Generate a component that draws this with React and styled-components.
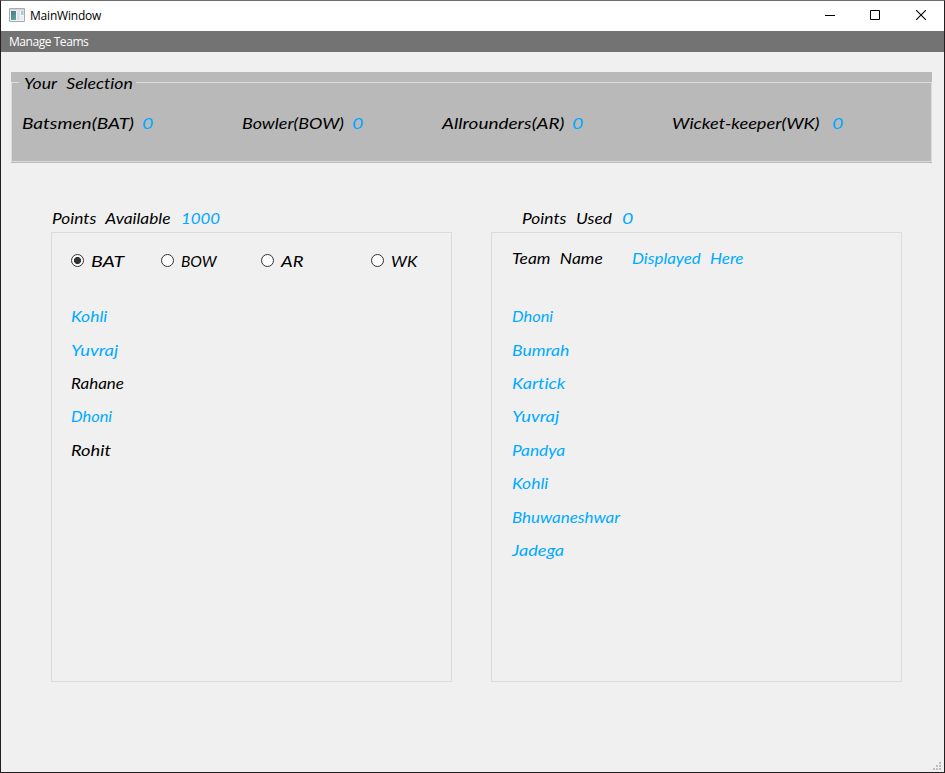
import React, { useLayoutEffect, useRef, useState } from "react";
import styled, { createGlobalStyle } from "styled-components";

const GlobalStyle = createGlobalStyle`
  * { box-sizing: border-box; }
  body { margin: 0; overflow: hidden; background: #f0f0f0; }
`;

const Window = styled.div`
  width: 945px;
  height: 773px;
  display: flex;
  flex-direction: column;
  background: #f0f0f0;
  border: 1px solid #231f20;
  border-top-color: #6c6c6c;
`;

const TitleBar = styled.header`
  height: 30px;
  flex: none;
  display: flex;
  align-items: center;
  background: #fff;
  padding-left: 8px;
`;

const AppIcon = styled.svg`
  width: 16px;
  height: 14px;
  margin: 0 5px 2px 0;
`;

const UiText = styled.span`
  font: 12px/20px "Open Sans", "Noto Sans", sans-serif;
  letter-spacing: ${(p) => p.$spacing}px;
  color: ${(p) => p.$color};
  white-space: nowrap;
  display: inline-block;
`;

const Controls = styled.div`
  display: flex;
  margin-left: auto;
`;

const ControlButton = styled.button`
  width: 46px;
  height: 30px;
  padding: 0 0 2px;
  border: 0;
  background: none;
  display: grid;
  place-items: center;

  &:first-child { width: 44px; }
  svg { display: block; }
`;

const MenuBar = styled.nav`
  height: 21px;
  flex: none;
  display: flex;
  align-items: center;
  padding-left: 8px;
  background: #737373;
`;

const Content = styled.main`
  flex: 1;
  padding: 20px 12px 0 10px;
`;

const GroupBox = styled.section`
  width: 921px;
  height: 91px;
  padding-bottom: 1px;
  background: #b9b9b9;
`;

const GroupHeader = styled.div`
  height: 24px;
  display: flex;
`;

const GroupRule = styled.div`
  width: ${(p) => (p.$width ? `${p.$width}px` : "auto")};
  flex: ${(p) => (p.$width ? "none" : "1")};
  margin-top: 10px;
  border-top: 1px solid #dcdcdc;
  border-left: ${(p) => (p.$side === "left" ? "1px solid #dcdcdc" : "0")};
  border-right: ${(p) => (p.$side === "right" ? "1px solid #dcdcdc" : "0")};
`;

const GroupTitle = styled.div`
  width: 117px;
  padding-left: 5px;
  margin-top: -1px;
`;

const GroupBody = styled.div`
  height: 66px;
  display: grid;
  grid-template-columns: 220px 200px 230px 1fr;
  padding: 15px 0 0 10px;
  border: 1px solid #dcdcdc;
  border-top: 0;
`;

const Pair = styled.div`
  display: flex;
  gap: ${(p) => p.$gap}px;
`;

const Columns = styled.div`
  display: grid;
  grid-template-columns: 401px 411px;
  column-gap: 39px;
  margin: 43px 0 0 40px;
`;

const Heading = styled.div`
  height: 26px;
  padding-left: ${(p) => p.$indent}px;
`;

const Panel = styled.section`
  height: 450px;
  border: 1px solid #dcdcdc;
  padding: 0 19px;
`;

const PanelTop = styled.div`
  height: 71.2px;
  padding-top: ${(p) => p.$top}px;
  padding-left: ${(p) => p.$indent || 0}px;
  display: flex;
`;

const RadioLabel = styled.label`
  width: ${(p) => p.$width}px;
  height: 24px;
  display: flex;
  gap: 7px;
`;

const Radio = styled.span`
  width: 13px;
  height: 13px;
  flex: none;
  margin-top: 5px;
  border: 1px solid #333;
  border-radius: 50%;
  background: ${(p) => (p.$checked ? "radial-gradient(circle, #333 3.2px, #fff 3.9px)" : "#fff")};
`;

const PlayerList = styled.ul`
  list-style: none;
  margin: 0;
  padding: 0 0 0 ${(p) => p.$indent}px;
`;

const PlayerRow = styled.li`
  height: 33.4px;
`;

const ScriptBox = styled.span`
  display: block;
  width: ${(p) => p.$width}px;
  height: 24px;
  flex: none;
  white-space: nowrap;
  font: italic 400 16px/24px Lato, sans-serif;
  font-variant-ligatures: none;
  color: ${(p) => (p.$blue ? "#00aaff" : "#000")};
  word-spacing: 5px;
`;

const ScriptInk = styled.span`
  display: inline-block;
  transform-origin: 0 50%;
`;

const SizeGrip = styled.svg`
  width: 8px;
  height: 8px;
  flex: none;
  align-self: flex-end;
  margin: 0 3px 2px 0;
`;

// Widens the letters so that the label fills its given width.
function Script({ width, blue, children }) {
  const ref = useRef(null);
  const [scale, setScale] = useState(1);
  useLayoutEffect(() => {
    setScale(width / ref.current.offsetWidth);
  }, [width, children]);
  return (
    <ScriptBox $width={width} $blue={blue}>
      <ScriptInk ref={ref} style={{ transform: `scaleX(${scale})` }}>{children}</ScriptInk>
    </ScriptBox>
  );
}

const selection = [
  ["Batsmen(BAT)", 112, 8],
  ["Bowler(BOW)", 102, 8],
  ["Allrounders(AR)", 122, 8],
  ["Wicket-keeper(WK)", 148, 12],
];

const roles = [
  ["BAT", 33, 90],
  ["BOW", 36, 100],
  ["AR", 22, 110],
  ["WK", 26, 60],
];

const available = [
  ["Kohli", 36, true],
  ["Yuvraj", 47, true],
  ["Rahane", 53, false],
  ["Dhoni", 41, true],
  ["Rohit", 40, false],
];

const picked = [
  ["Dhoni", 41, true],
  ["Bumrah", 57, true],
  ["Kartick", 53, true],
  ["Yuvraj", 47, true],
  ["Pandya", 53, true],
  ["Kohli", 36, true],
  ["Bhuwaneshwar", 108, true],
  ["Jadega", 52, true],
];

function Players({ items, indent }) {
  return (
    <PlayerList $indent={indent}>
      {items.map(([name, width, blue]) => (
        <PlayerRow key={name}>
          <Script width={width} blue={blue}>{name}</Script>
        </PlayerRow>
      ))}
    </PlayerList>
  );
}

export default function App() {
  return (
    <>
      <GlobalStyle />
      <Window>
        <TitleBar>
          <AppIcon viewBox="0 0 16 14">
            <defs>
              <linearGradient id="pane" x1="0" y1="0" x2="0.5" y2="1">
                <stop offset="0" stopColor="#4c7399" />
                <stop offset="1" stopColor="#58a58a" />
              </linearGradient>
            </defs>
            <path d="M.5 .5h15v13H.5z" fill="#f4f4f4" stroke="#a5abb1" />
            <path d="M1 1h14v1.5H1z" fill="#d3d8dc" />
            <path d="M2 3h5v9H2z" fill="url(#pane)" />
            <path d="M8 3h3v9H8z" fill="#dfe3e6" />
            <path d="M12 3h2.5v4H12z" fill="#a9cbd0" />
            <path d="M12 8h2v4h-2z" fill="#e9eced" />
          </AppIcon>
          <UiText $color="#000" $spacing={-0.2}>MainWindow</UiText>
          <Controls>
            <ControlButton aria-label="Minimize">
              <svg width="10" height="10"><path d="M0 5.5h10" stroke="#000" /></svg>
            </ControlButton>
            <ControlButton aria-label="Maximize">
              <svg width="10" height="10"><path d="M.5 .5h9v9h-9z" fill="none" stroke="#000" /></svg>
            </ControlButton>
            <ControlButton aria-label="Close">
              <svg width="10" height="10"><path d="M0 0l10 10M10 0L0 10" stroke="#000" strokeWidth="1.1" /></svg>
            </ControlButton>
          </Controls>
        </TitleBar>
        <MenuBar>
          <UiText $color="#fff" $spacing={-0.45}>Manage Teams</UiText>
        </MenuBar>
        <Content>
          <GroupBox>
            <GroupHeader>
              <GroupRule $width={8} $side="left" />
              <GroupTitle><Script width={109}>Your Selection</Script></GroupTitle>
              <GroupRule $side="right" />
            </GroupHeader>
            <GroupBody>
              {selection.map(([label, width, gap]) => (
                <Pair key={label} $gap={gap}>
                  <Script width={width}>{label}</Script>
                  <Script width={11} blue>0</Script>
                </Pair>
              ))}
            </GroupBody>
          </GroupBox>
          <Columns>
            <div>
              <Heading $indent={1}>
                <Pair $gap={10}>
                  <Script width={119}>Points Available</Script>
                  <Script width={39} blue>1000</Script>
                </Pair>
              </Heading>
              <Panel>
                <PanelTop $top={16}>
                  {roles.map(([role, width, cell], i) => (
                    <RadioLabel key={role} $width={cell}>
                      <Radio $checked={i === 0} />
                      <Script width={width}>{role}</Script>
                    </RadioLabel>
                  ))}
                </PanelTop>
                <Players items={available} indent={0} />
              </Panel>
            </div>
            <div>
              <Heading $indent={31}>
                <Pair $gap={10}>
                  <Script width={90}>Points Used</Script>
                  <Script width={11} blue>0</Script>
                </Pair>
              </Heading>
              <Panel>
                <PanelTop $top={13} $indent={1}>
                  <Pair $gap={29}>
                    <Script width={91}>Team Name</Script>
                    <Script width={111} blue>Displayed Here</Script>
                  </Pair>
                </PanelTop>
                <Players items={picked} indent={1} />
              </Panel>
            </div>
          </Columns>
        </Content>
        <SizeGrip viewBox="0 0 8 8" fill="#bdbdbd">
          <path d="M6 0h2v2H6zM3 3h2v2H3zM6 3h2v2H6zM0 6h2v2H0zM3 6h2v2H3zM6 6h2v2H6z" />
        </SizeGrip>
      </Window>
    </>
  );
}
